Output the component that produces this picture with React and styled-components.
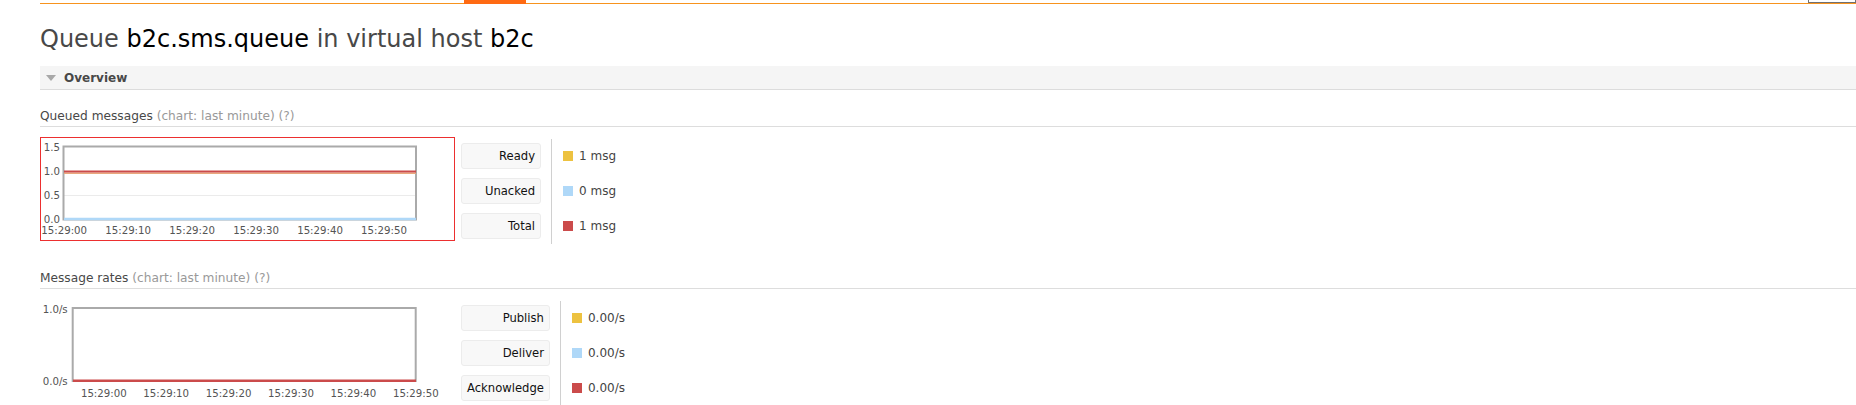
import React from "react";
import styled, { createGlobalStyle } from "styled-components";

const GlobalStyle = createGlobalStyle`
  body {
    margin: 0;
    background: #fff;
    font-family: "DejaVu Sans", Verdana, sans-serif;
    font-size: 12px;
    color: #484848;
  }
`;

const Page = styled.div`
  padding-left: 40px;
`;

const Nav = styled.div`
  display: flex;
  align-items: flex-start;
  height: 3px;
  border-bottom: 1px solid #f7931e;
`;

const NavTab = styled.div`
  margin-left: 424px;
  width: 62px;
  height: 4px;
  background: #ff6a13;
`;

const NavBox = styled.div`
  margin-left: auto;
  width: 48px;
  height: 3px;
  box-sizing: border-box;
  border: 1px solid #707070;
  border-top: none;
  background: #fff;
`;

const Title = styled.h1`
  margin: 21px 0 0;
  font-size: 24px;
  line-height: 28px;
  font-weight: normal;
  color: #484848;
`;

const Name = styled.b`
  font-weight: normal;
  color: #000;
`;

const SectionBar = styled.div`
  margin-top: 13px;
  height: 23px;
  display: flex;
  align-items: center;
  gap: 8px;
  padding-left: 6px;
  background: #f5f5f5;
  border-bottom: 1px solid #dcdcdc;
  font-weight: bold;
  color: #484848;
`;

const Triangle = styled.span`
  width: 0;
  height: 0;
  margin-top: 1px;
  border-left: 5.5px solid transparent;
  border-right: 5.5px solid transparent;
  border-top: 6px solid #a8a8a8;
`;

const ChartHeading = styled.h3`
  margin: ${(props) => props.$top}px 0 0;
  padding-bottom: 2px;
  font-size: 12.2px;
  line-height: 15px;
  font-weight: normal;
  color: #484848;
  border-bottom: 1px solid #ddd;
`;

const Muted = styled.span`
  color: #999;
`;

const ChartRow = styled.div`
  display: flex;
  align-items: flex-start;
  margin-top: 10px;
`;

const ChartFrame = styled.div`
  width: 415px;
  height: 104px;
  box-sizing: border-box;
  border: 1px solid ${(props) => (props.$marked ? "#ec2f2f" : "transparent")};

  svg {
    display: block;
    font-family: "DejaVu Sans", Verdana, sans-serif;
    font-size: 10.2px;
  }
`;

const Legend = styled.div`
  display: flex;
  margin-left: 6px;
  margin-top: 2px;
`;

const LegendLabels = styled.div`
  display: flex;
  flex-direction: column;
  gap: 9px;
  padding: 4px 10px 5px 0;
`;

const LegendLabel = styled.div`
  height: 26px;
  min-width: 80px;
  box-sizing: border-box;
  padding: 0 5px;
  text-align: right;
  line-height: 24px;
  font-size: 11.6px;
  color: #111;
  background: #f8f8f8;
  border: 1px solid #ececec;
  border-radius: 3px;
`;

const LegendValues = styled.div`
  display: flex;
  flex-direction: column;
  gap: 9px;
  padding: 4px 0 5px 11px;
  border-left: 1px solid #d0d0d0;
`;

const LegendValue = styled.div`
  height: 26px;
  display: flex;
  align-items: center;
  gap: 6px;
  color: #444;
`;

const Swatch = styled.span`
  width: 10px;
  height: 10px;
  background: ${(props) => props.$color};
`;

const YELLOW = "#edc240";
const BLUE = "#afd8f8";
const RED = "#cb4b4b";
const TICK = "#545454";

const times = ["15:29:00", "15:29:10", "15:29:20", "15:29:30", "15:29:40", "15:29:50"];

const QueuedChart = () => (
  <svg width="413" height="102">
    <line x1="23" x2="375" y1="57.5" y2="57.5" stroke="#ebebeb" />
    <rect x="22.5" y="8.5" width="352.5" height="73" fill="none" stroke="#aaa" strokeWidth="2" />
    <line x1="23" x2="375" y1="35.3" y2="35.3" stroke="#e9a87c" strokeWidth="1.5" />
    <line x1="23" x2="375" y1="33.5" y2="33.5" stroke={RED} strokeWidth="2" />
    <line x1="23" x2="375" y1="81" y2="81" stroke={BLUE} strokeWidth="2.5" />
    {[
      ["1.5", 9.6],
      ["1.0", 33.8],
      ["0.5", 58],
      ["0.0", 82],
    ].map(([t, y]) => (
      <text key={t} x="19" y={y} textAnchor="end" dominantBaseline="middle" fill={TICK}>
        {t}
      </text>
    ))}
    {times.map((t, i) => (
      <text key={t} x={23.2 + i * 63.96} y="93" textAnchor="middle" dominantBaseline="middle" fill={TICK}>
        {t}
      </text>
    ))}
  </svg>
);

const RatesChart = () => (
  <svg width="413" height="102">
    <rect x="31.7" y="8" width="343" height="73" fill="none" stroke="#aaa" strokeWidth="2" />
    <line x1="32" x2="375" y1="80.8" y2="80.8" stroke={RED} strokeWidth="2.5" />
    <text x="26.7" y="10" textAnchor="end" dominantBaseline="middle" fill={TICK}>
      1.0/s
    </text>
    <text x="26.7" y="82" textAnchor="end" dominantBaseline="middle" fill={TICK}>
      0.0/s
    </text>
    {times.map((t, i) => (
      <text key={t} x={62.8 + i * 62.4} y="94" textAnchor="middle" dominantBaseline="middle" fill={TICK}>
        {t}
      </text>
    ))}
  </svg>
);

const LegendTable = ({ rows }) => (
  <Legend>
    <LegendLabels>
      {rows.map((r) => (
        <LegendLabel key={r.label}>{r.label}</LegendLabel>
      ))}
    </LegendLabels>
    <LegendValues>
      {rows.map((r) => (
        <LegendValue key={r.label}>
          <Swatch $color={r.color} />
          {r.value}
        </LegendValue>
      ))}
    </LegendValues>
  </Legend>
);

const queuedRows = [
  { label: "Ready", color: YELLOW, value: "1 msg" },
  { label: "Unacked", color: BLUE, value: "0 msg" },
  { label: "Total", color: RED, value: "1 msg" },
];

const rateRows = [
  { label: "Publish", color: YELLOW, value: "0.00/s" },
  { label: "Deliver", color: BLUE, value: "0.00/s" },
  { label: "Acknowledge", color: RED, value: "0.00/s" },
];

const App = () => {
  return (
    <Page>
      <GlobalStyle />
      <Nav>
        <NavTab />
        <NavBox />
      </Nav>

      <Title>
        Queue <Name>b2c.sms.queue</Name> in virtual host <Name>b2c</Name>
      </Title>

      <SectionBar>
        <Triangle />
        Overview
      </SectionBar>

      <ChartHeading $top={19}>
        Queued messages <Muted>(chart: last minute) (?)</Muted>
      </ChartHeading>
      <ChartRow>
        <ChartFrame $marked>
          <QueuedChart />
        </ChartFrame>
        <LegendTable rows={queuedRows} />
      </ChartRow>

      <ChartHeading $top={27}>
        Message rates <Muted>(chart: last minute) (?)</Muted>
      </ChartHeading>
      <ChartRow>
        <ChartFrame>
          <RatesChart />
        </ChartFrame>
        <LegendTable rows={rateRows} />
      </ChartRow>
    </Page>
  );
};

export default App;
